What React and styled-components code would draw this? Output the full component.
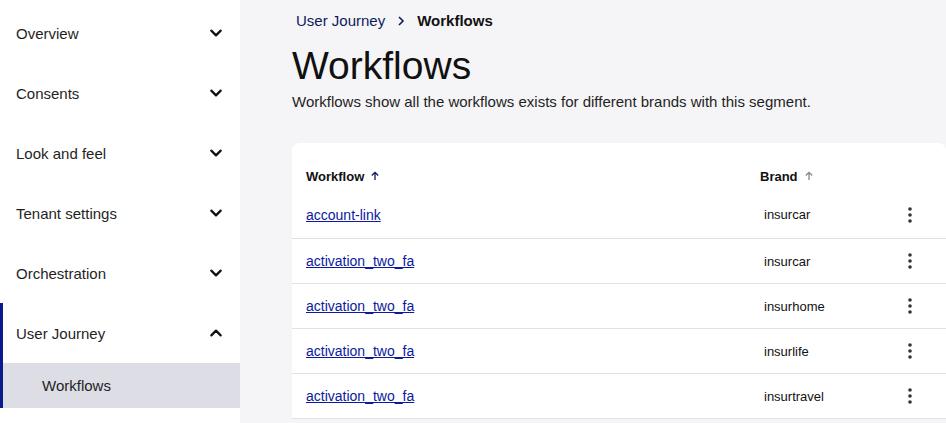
import React from 'react';
import styled, { createGlobalStyle } from 'styled-components';

const Global = createGlobalStyle`
  body { margin: 0; font-family: "Liberation Sans", Arial, sans-serif; background: #f5f5f7; }
`;

const Layout = styled.div`
  display: flex;
  height: 423px;
  overflow: hidden;
`;

const Sidebar = styled.nav`
  width: 240px;
  flex-shrink: 0;
  background: white;
  padding-top: 3px;
`;

const Group = styled.div`
  border-left: 3px solid ${p => (p.active ? '#0a1a8c' : 'transparent')};
`;

const NavItem = styled.div`
  height: 60px;
  display: flex;
  align-items: center;
  justify-content: space-between;
  padding: 0 16px 0 ${p => (p.active ? 13 : 16)}px;
  font-size: 15px;
  color: #1f1f24;
`;

const SubItem = styled.div`
  height: 45px;
  display: flex;
  align-items: center;
  padding-left: 39px;
  background: #dddde5;
  font-size: 15px;
  color: #1f1f24;
`;

const Main = styled.main`
  flex: 1;
  padding: 12px 0 0 52px;
`;

const Crumbs = styled.div`
  display: flex;
  align-items: center;
  gap: 12px;
  font-size: 15px;
  color: #0f1a5c;
  padding-left: 4px;
  strong { color: #111; font-weight: 700; }
`;

const Title = styled.h1`
  margin: 15px 0 0;
  font-size: 39px;
  font-weight: 400;
  color: #111;
`;

const Desc = styled.p`
  margin: 5px 0 0;
  font-size: 15px;
  color: #1f1f24;
`;

const Card = styled.div`
  margin-top: 33px;
  background: white;
  border-radius: 8px 8px 0 0;
  padding-top: 18px;
`;

const Row = styled.div`
  display: grid;
  grid-template-columns: 1fr 138px 34px;
  align-items: center;
  height: ${p => (p.head ? 30 : p.first ? 48 : 45)}px;
  padding: 0 14px;
  border-bottom: ${p => (p.head ? 'none' : '1px solid #e2e2e6')};
  box-sizing: border-box;
`;

const Head = styled.span`
  font-size: 13px;
  font-weight: 700;
  color: #111;
  display: flex;
  align-items: center;
  gap: 6px;
  svg { color: ${p => (p.muted ? '#888' : '#0f1a5c')}; }
`;

const Link = styled.a`
  font-size: 14px;
  color: #0b1aa0;
  text-decoration: underline;
`;

const Brand = styled.span`
  font-size: 13px;
  color: #111;
  padding-left: 4px;
`;

const KebabCell = styled.span`
  display: flex;
  padding-left: 10px;
`;

const Chevron = ({ up }) => (
  <svg width="16" height="16" viewBox="0 0 24 24" fill="none" stroke="#111" strokeWidth="3.4" strokeLinecap="round" strokeLinejoin="round">
    <path d={up ? 'M5 15.5l7-7 7 7' : 'M5 8.5l7 7 7-7'} />
  </svg>
);

const Arrow = () => (
  <svg width="10" height="10" viewBox="0 0 10 10" fill="none" stroke="currentColor" strokeWidth="1.3">
    <path d="M5 9V1.5M1.8 4.5L5 1.3l3.2 3.2" />
  </svg>
);

const Kebab = () => (
  <svg width="4" height="16" viewBox="0 0 4 16" fill="#333">
    <circle cx="2" cy="2" r="1.8" /><circle cx="2" cy="8" r="1.8" /><circle cx="2" cy="14" r="1.8" />
  </svg>
);

const nav = ['Overview', 'Consents', 'Look and feel', 'Tenant settings', 'Orchestration'];
const rows = [
  ['account-link', 'insurcar'],
  ['activation_two_fa', 'insurcar'],
  ['activation_two_fa', 'insurhome'],
  ['activation_two_fa', 'insurlife'],
  ['activation_two_fa', 'insurtravel'],
];

export default function App() {
  return (
    <Layout>
      <Global />
      <Sidebar>
        {nav.map(n => (
          <NavItem key={n}>{n}<Chevron /></NavItem>
        ))}
        <Group active>
          <NavItem active>User Journey<Chevron up /></NavItem>
          <SubItem>Workflows</SubItem>
        </Group>
      </Sidebar>
      <Main>
        <Crumbs>
          <span>User Journey</span>
          <svg width="8" height="10" viewBox="0 0 8 10" fill="none" stroke="#0f1a5c" strokeWidth="1.6"><path d="M2 1l4 4-4 4" /></svg>
          <strong>Workflows</strong>
        </Crumbs>
        <Title>Workflows</Title>
        <Desc>Workflows show all the workflows exists for different brands with this segment.</Desc>
        <Card>
          <Row head>
            <Head>Workflow <Arrow /></Head>
            <Head muted>Brand <Arrow /></Head>
            <span />
          </Row>
          {rows.map(([w, b], i) => (
            <Row key={i} first={i === 0}>
              <Link>{w}</Link>
              <Brand>{b}</Brand>
              <KebabCell><Kebab /></KebabCell>
            </Row>
          ))}
        </Card>
      </Main>
    </Layout>
  );
}
